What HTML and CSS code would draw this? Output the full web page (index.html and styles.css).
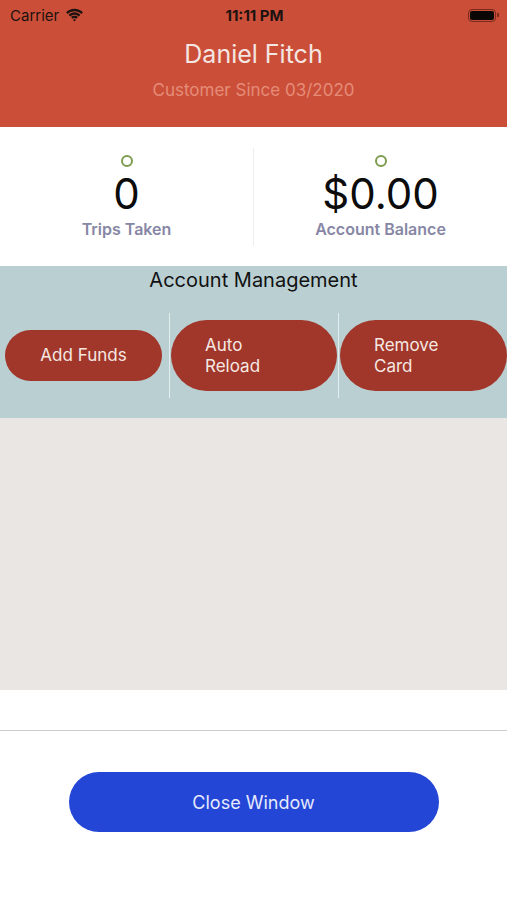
FILE: index.html
```html
<!DOCTYPE html>
<html lang="en">
<head>
    <meta charset="UTF-8">
    <meta name="viewport" content="width=device-width, initial-scale=1.0">
    <title>Account</title>
    <link rel="stylesheet" href="styles.css">
</head>
<body>

<header class="header">
    <div class="status">
        <div class="status-left">
            <span>Carrier</span>
            <svg class="wifi" width="19" height="14" viewBox="0 0 19 14">
                <path d="M9.5 3.2c2.6 0 5 1 6.8 2.7l1.6-1.7C15.7 2.1 12.7 0.8 9.5 0.8S3.3 2.1 1.1 4.2l1.6 1.7C4.5 4.2 6.9 3.2 9.5 3.2z" fill="#1c1210"/>
                <path d="M9.5 6.7c1.6 0 3.1 0.6 4.3 1.7l1.6-1.7C13.8 5.2 11.7 4.3 9.5 4.3S5.2 5.2 3.6 6.7l1.6 1.7C6.4 7.3 7.9 6.7 9.5 6.7z" fill="#1c1210"/>
                <path d="M9.5 10.1c0.7 0 1.3 0.3 1.8 0.7l1.7-1.7C12.1 8.3 10.8 7.8 9.5 7.8S6.9 8.3 6 9.1l1.7 1.7C8.2 10.4 8.8 10.1 9.5 10.1z M9.5 13.4l1.6-1.6c-0.4-0.4-1-0.6-1.6-0.6s-1.2 0.2-1.6 0.6z" fill="#1c1210"/>
            </svg>
        </div>
        <div class="time">11:11 PM</div>
        <div class="status-right">
            <div class="battery"><div class="battery-fill"></div></div>
            <div class="battery-tip"></div>
        </div>
    </div>
    <div class="name">Daniel Fitch</div>
    <div class="since">Customer Since 03/2020</div>
</header>

<section class="stats">
    <div class="stat">
        <div class="dot"></div>
        <div class="stat-value">0</div>
        <div class="stat-label">Trips Taken</div>
    </div>
    <div class="stat-divider"></div>
    <div class="stat">
        <div class="dot"></div>
        <div class="stat-value">$0.00</div>
        <div class="stat-label">Account Balance</div>
    </div>
</section>

<section class="manage">
    <div class="manage-title">Account Management</div>
    <div class="actions">
        <button class="pill pill-small">Add Funds</button>
        <div class="action-divider"></div>
        <button class="pill pill-big">Auto<br>Reload</button>
        <div class="action-divider"></div>
        <button class="pill pill-big pill-last">Remove<br>Card</button>
    </div>
</section>

<section class="empty"></section>

<div class="spacer"></div>

<footer class="footer">
    <button class="close-btn">Close Window</button>
</footer>

</body>
</html>
```

FILE: styles.css
```css
body {
    font-family: Inter, "Open Sans", sans-serif;
    margin: 0;
    padding: 0;
    width: 507px;
    height: 900px;
    background-color: #fff;
    overflow: hidden;
}
.header {
    background-color: #cb4f38;
    height: 127px;
    text-align: center;
}
.status {
    height: 30px;
    display: flex;
    align-items: center;
    justify-content: space-between;
    padding: 0 8px 0 10px;
    color: #1c1210;
}
.status-left {
    display: flex;
    align-items: center;
    gap: 6px;
    font-size: 15px;
    width: 110px;
}
.time {
    font-size: 15px;
    font-weight: 700;
}
.status-right {
    width: 110px;
    display: flex;
    justify-content: flex-end;
    align-items: center;
}
.battery {
    width: 28px;
    height: 13px;
    border: 1px solid #7a2a1e;
    border-radius: 4px;
    padding: 1px;
    box-sizing: border-box;
}
.battery-fill {
    width: 100%;
    height: 100%;
    background-color: #0b0706;
    border-radius: 2px;
}
.battery-tip {
    width: 2px;
    height: 4px;
    background-color: #7a2a1e;
    border-radius: 0 1px 1px 0;
    margin-left: 1px;
}
.name {
    color: #f4e6e2;
    font-size: 25px;
    margin-top: 9px;
    line-height: 30px;
}
.since {
    color: #e58c79;
    font-size: 17px;
    margin-top: 10px;
    line-height: 22px;
}
.stats {
    height: 139px;
    display: flex;
    align-items: center;
}
.stat {
    flex: 1;
    display: flex;
    flex-direction: column;
    align-items: center;
    padding-top: 1px;
}
.dot {
    width: 8px;
    height: 8px;
    border: 2px solid #7d9c4e;
    border-radius: 50%;
}
.stat-value {
    font-size: 42px;
    line-height: 44px;
    color: #0c0c0c;
    margin-top: 5px;
}
.stat-label {
    font-size: 16px;
    font-weight: 600;
    color: #8787a5;
    margin-top: 3px;
}
.stat-divider {
    width: 1px;
    height: 98px;
    background-color: #eeeeee;
}
.manage {
    background-color: #bacfd1;
    height: 152px;
}
.manage-title {
    text-align: center;
    font-size: 20px;
    color: #111;
    line-height: 28px;
}
.actions {
    display: flex;
    align-items: center;
    margin-top: 19px;
    height: 85px;
    padding-left: 5px;
}
.action-divider {
    width: 1px;
    height: 85px;
    background-color: #e4eeee;
    margin: 0 1px;
}
.pill {
    border: none;
    background-color: #a1372a;
    color: #f5e8e3;
    font-family: inherit;
    font-size: 17px;
    line-height: 21px;
    cursor: pointer;
}
.pill-small {
    width: 157px;
    height: 51px;
    border-radius: 26px;
    margin-right: 6px;
}
.pill-big {
    width: 166px;
    height: 71px;
    border-radius: 36px;
    text-align: left;
    padding-left: 34px;
}
.pill-last {
    width: 167px;
}
.empty {
    background-color: #e9e6e3;
    height: 272px;
}
.spacer {
    height: 40px;
    border-bottom: 1px solid #cccccc;
}
.footer {
    display: flex;
    justify-content: center;
    padding-top: 41px;
}
.close-btn {
    width: 370px;
    height: 60px;
    border: none;
    border-radius: 30px;
    background-color: #2446d6;
    color: #e6eafc;
    font-family: inherit;
    font-size: 18px;
    cursor: pointer;
}
```
